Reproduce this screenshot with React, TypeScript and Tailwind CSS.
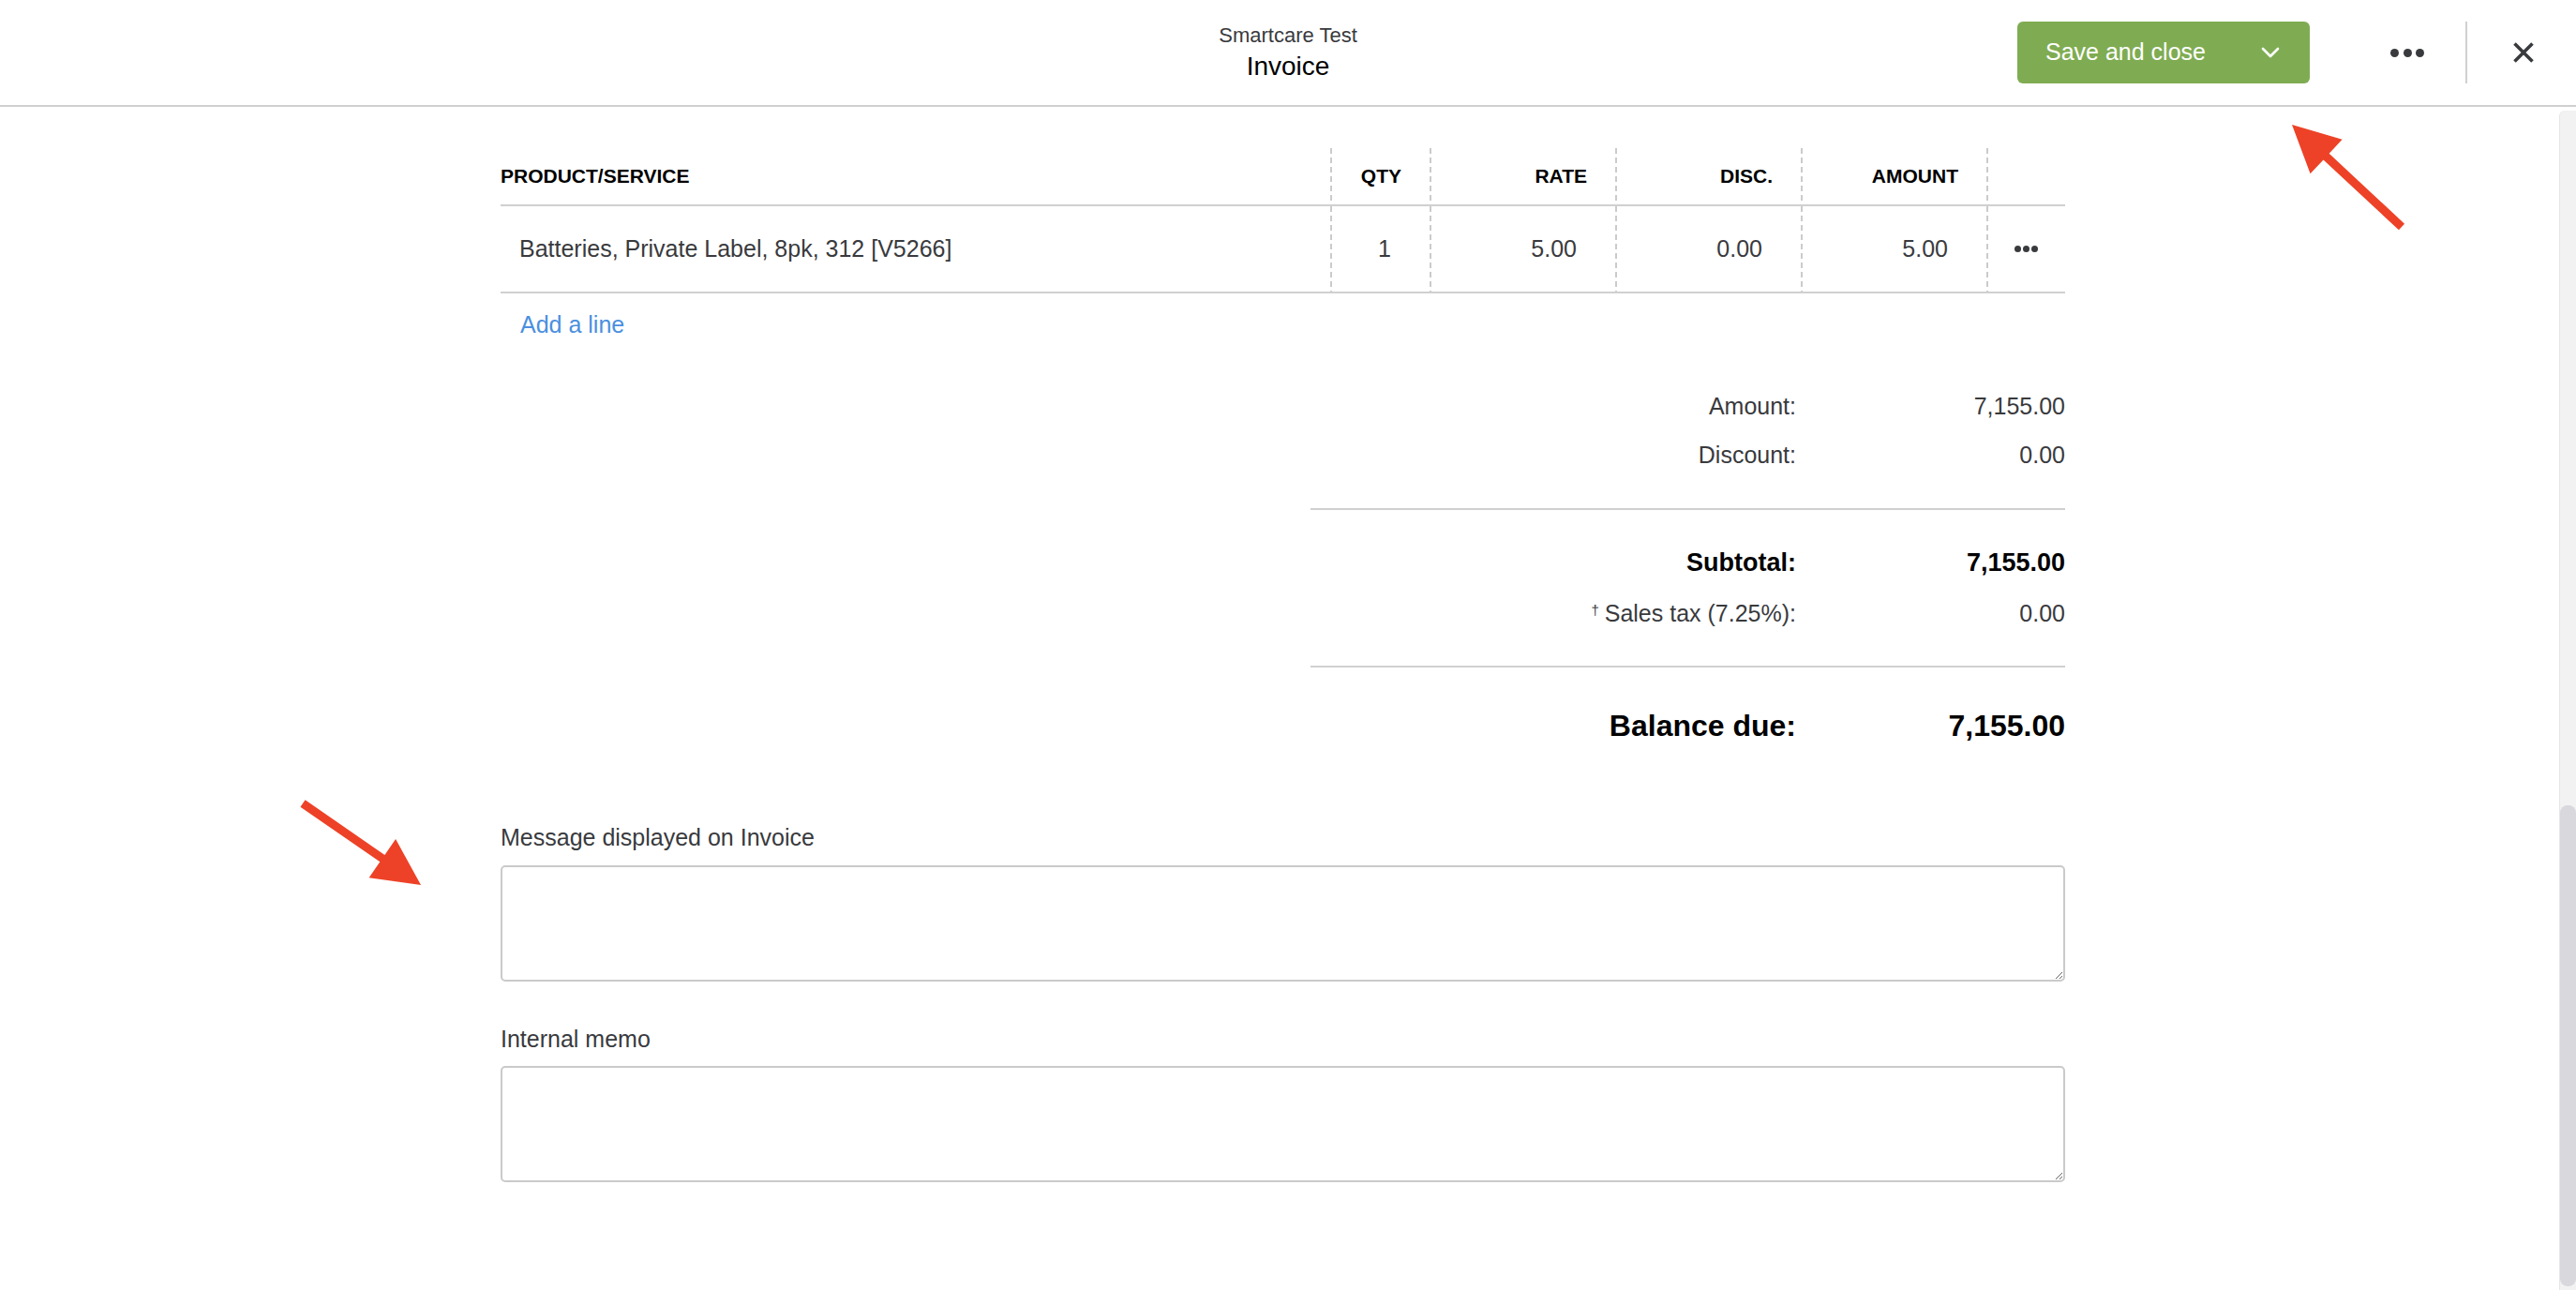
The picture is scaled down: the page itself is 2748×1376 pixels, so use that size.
import React from 'react';

// invoice editor, bottom part (lines + totals + memo fields)

const headCols = [
  { label: 'PRODUCT/SERVICE', w: 'w-[885px]', first: true },
  { label: 'QTY', w: 'w-[106px]' },
  { label: 'RATE', w: 'w-[198px]' },
  { label: 'DISC.', w: 'w-[198px]' },
  { label: 'AMOUNT', w: 'w-[198px]' },
];

const dash =
  'bg-[repeating-linear-gradient(to_bottom,#cbcbcb_0,#cbcbcb_6px,transparent_6px,transparent_10px)] bg-[length:2px_100%] bg-no-repeat bg-left';

function Arrow({ tip, tail }: { tip: [number, number]; tail: [number, number] }) {
  const [tx, ty] = tip;
  const [ex, ey] = tail;
  const len = Math.hypot(ex - tx, ey - ty);
  const ux = (ex - tx) / len;
  const uy = (ey - ty) / len;
  const nx = -uy;
  const ny = ux;
  const head = 50;
  const hw = 25;
  const sw = 4.5;
  const bx = tx + ux * head;
  const by = ty + uy * head;
  const pts = [
    [tx, ty],
    [bx + nx * hw, by + ny * hw],
    [bx + nx * sw, by + ny * sw],
    [ex + nx * sw, ey + ny * sw],
    [ex - nx * sw, ey - ny * sw],
    [bx - nx * sw, by - ny * sw],
    [bx - nx * hw, by - ny * hw],
  ]
    .map((p) => p.join(','))
    .join(' ');
  return <polygon points={pts} fill="#ed4227" />;
}

function TotalRow({ label, value, cls = '' }: { label: React.ReactNode; value: string; cls?: string }) {
  return (
    <div className={`flex items-center ${cls}`}>
      <div className="w-[518px] text-right">{label}</div>
      <div className="flex-1 text-right">{value}</div>
    </div>
  );
}

export default function App() {
  return (
    <div className="relative h-[1376px] w-[2748px] overflow-hidden bg-white font-['Liberation_Sans',Arial,sans-serif] text-[#393a3d]">
      {/* top bar */}
      <header className="grid h-[114px] grid-cols-[1fr_auto_1fr] border-b-2 border-[#d0d0d0]">
        <div />
        <div className="flex flex-col items-center pt-[25px]">
          <div className="text-[22px] leading-[26px]">Smartcare Test</div>
          <div className="mt-[3px] text-[28px] leading-[34px] text-black">Invoice</div>
        </div>
        <div className="flex items-center justify-end pr-[16px]">
          <button className="flex h-[66px] w-[312px] items-center justify-between rounded-[6px] bg-[#7fac52] pl-[30px] pr-[32px] text-[25px] text-white">
            <span>Save and close</span>
            <svg width="20" height="12" viewBox="0 0 20 12" fill="none">
              <path d="M2 2l8 8 8-8" stroke="white" strokeWidth="2.6" strokeLinecap="round" strokeLinejoin="round" />
            </svg>
          </button>
          <div className="ml-[64px] flex w-[80px] justify-center gap-[4.5px]">
            <span className="h-[9px] w-[9px] rounded-full bg-[#393a3d]" />
            <span className="h-[9px] w-[9px] rounded-full bg-[#393a3d]" />
            <span className="h-[9px] w-[9px] rounded-full bg-[#393a3d]" />
          </div>
          <div className="ml-[22px] h-[66px] w-[2px] bg-[#d0d0d0]" />
          <div className="ml-[20px] flex w-[80px] justify-center">
            <svg width="24" height="24" viewBox="0 0 24 24" fill="none">
              <path d="M2.5 2.5l19 19M21.5 2.5l-19 19" stroke="#393a3d" strokeWidth="3.6" />
            </svg>
          </div>
        </div>
      </header>

      <div className="flex h-[1262px]">
        <main className="flex-1 pt-[44px]">
          <div className="ml-[534px] w-[1669px]">
            {/* line items */}
            <div className="flex h-[62px] border-b-2 border-[#d0d0d0] text-[21px] font-bold text-black">
              {headCols.map((c) => (
                <div
                  key={c.label}
                  className={`flex h-full items-center ${c.w} ${c.first ? '' : `justify-end pr-[30px] ${dash}`}`}
                >
                  {c.label}
                </div>
              ))}
              <div className={`h-full w-[84px] ${dash}`} />
            </div>
            <div className="flex h-[93px] border-b-2 border-[#d0d0d0] text-[25px]">
              <div className="flex h-full w-[885px] items-center pl-[20px]">Batteries, Private Label, 8pk, 312 [V5266]</div>
              <div className={`flex h-full w-[106px] items-center justify-end pr-[41px] ${dash}`}>1</div>
              <div className={`flex h-full w-[198px] items-center justify-end pr-[41px] ${dash}`}>5.00</div>
              <div className={`flex h-full w-[198px] items-center justify-end pr-[41px] ${dash}`}>0.00</div>
              <div className={`flex h-full w-[198px] items-center justify-end pr-[41px] ${dash}`}>5.00</div>
              <div className={`flex h-full w-[84px] items-center justify-center gap-[2px] ${dash}`}>
                <span className="h-[7px] w-[7px] rounded-full bg-[#393a3d]" />
                <span className="h-[7px] w-[7px] rounded-full bg-[#393a3d]" />
                <span className="h-[7px] w-[7px] rounded-full bg-[#393a3d]" />
              </div>
            </div>
            <div className="mt-[18px] pl-[21px] text-[25px] leading-[30px] text-[#4a8fe0]">Add a line</div>

            {/* totals */}
            <div className="ml-[864px] mt-[47px] w-[805px] text-[25px]">
              <TotalRow cls="h-[52px]" label="Amount:" value="7,155.00" />
              <TotalRow cls="h-[52px]" label="Discount:" value="0.00" />
              <div className="mt-[30px] h-[2px] bg-[#d0d0d0]" />
              <TotalRow cls="mt-[30px] h-[52px] text-[27px] font-bold text-black" label="Subtotal:" value="7,155.00" />
              <TotalRow
                cls="mt-[3px] h-[52px]"
                label={
                  <>
                    <span className="relative top-[-7px] mr-[6px] text-[15px]">†</span>Sales tax (7.25%):
                  </>
                }
                value="0.00"
              />
              <div className="mt-[29px] h-[2px] bg-[#d0d0d0]" />
              <TotalRow cls="mt-[40px] h-[44px] text-[32px] font-bold text-black" label="Balance due:" value="7,155.00" />
            </div>

            {/* messages */}
            <div className="mt-[82px] text-[25px] leading-[30px]">Message displayed on Invoice</div>
            <textarea className="mt-[15px] block h-[124px] w-full rounded-[5px] border-2 border-[#cacaca] bg-white" />
            <div className="mt-[46px] text-[25px] leading-[30px]">Internal memo</div>
            <textarea className="mt-[14px] block h-[124px] w-full rounded-[5px] border-2 border-[#cacaca] bg-white" />
          </div>
        </main>

        {/* scrollbar */}
        <div className="w-[18px] pt-[4px]">
          <div className="flex h-full flex-col rounded-tl-[6px] border-l border-[#e6e6e6] bg-[#f2f2f2]">
            <div className="mt-[741px] h-[513px] rounded-[8px] bg-[#d8d8dd]" />
          </div>
        </div>
      </div>

      {/* annotation arrows */}
      <svg className="pointer-events-none absolute left-0 top-0" width="2748" height="1376">
        <Arrow tip={[2445, 133]} tail={[2562, 242]} />
        <Arrow tip={[449, 944]} tail={[323, 857]} />
      </svg>
    </div>
  );
}
